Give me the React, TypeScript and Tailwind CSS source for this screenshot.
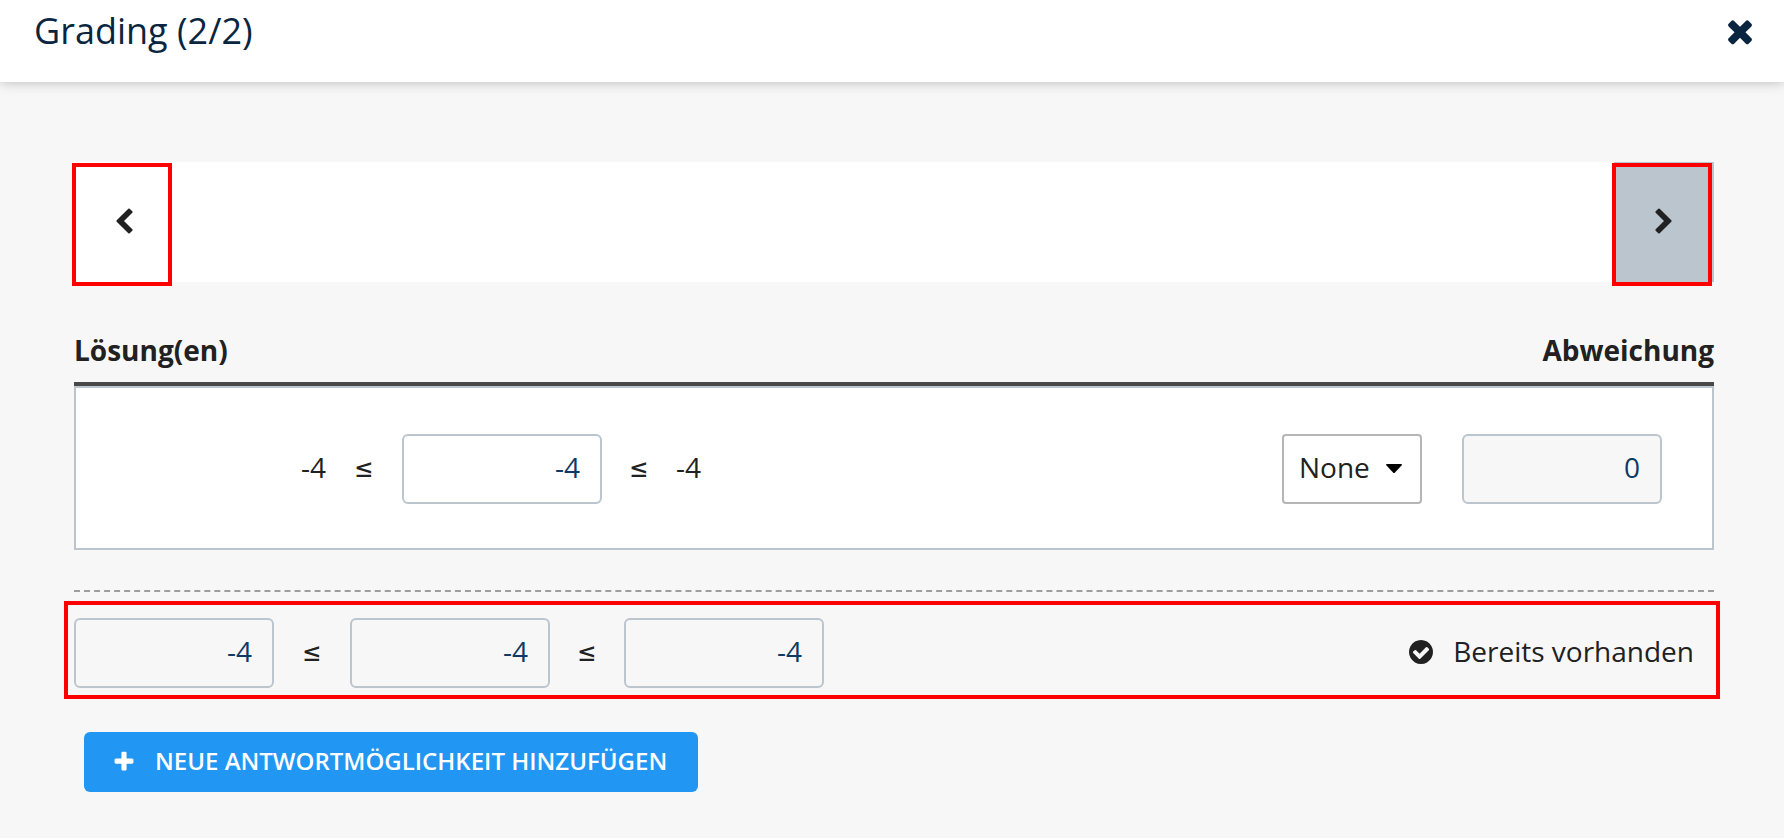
import React, { useState } from 'react'

const icons = {
  close: 'M1490 1322q0 40-28 68l-136 136q-28 28-68 28t-68-28l-294-294-294 294q-28 28-68 28t-68-28l-136-136q-28-28-28-68t28-68l294-294-294-294q-28-28-28-68t28-68l136-136q28-28 68-28t68 28l294 294 294-294q28-28 68-28t68 28l136 136q28 28 28 68t-28 68l-294 294 294 294q28 28 28 68z',
  plus: 'M1600 736v192q0 40-28 68t-68 28h-416v416q0 40-28 68t-68 28h-192q-40 0-68-28t-28-68v-416h-416q-40 0-68-28t-28-68v-192q0-40 28-68t68-28h416v-416q0-40 28-68t68-28h192q40 0 68 28t28 68v416h416q40 0 68 28t28 68z',
  check: 'M1412 734q0-28-18-46l-91-90q-19-19-45-19t-45 19l-408 407-226-226q-19-19-45-19t-45 19l-91 90q-18 18-18 46 0 27 18 45l362 362q19 19 45 19 27 0 46-19l543-543q18-18 18-45zm252 162q0 209-103 385.5t-279.5 279.5-385.5 103-385.5-103-279.5-279.5-103-385.5 103-385.5 279.5-279.5 385.5-103 385.5 103 279.5 279.5 103 385.5z',
  chevron: 'M1427 301l-531 531 531 531q19 19 19 45t-19 45l-166 166q-19 19-45 19t-45-19l-742-742q-19-19-19-45t19-45l742-742q19-19 45-19t45 19l166 166q19 19 19 45t-19 45z',
}

interface IconProps {
  name: keyof typeof icons
  className: string
}

const Icon: React.FC<IconProps> = ({ name, className }) => (
  <svg viewBox="0 0 1792 1792" fill="currentColor" aria-hidden="true" className={className}>
    <path d={icons[name]} />
  </svg>
)

interface NumberFieldProps {
  label: string
  value: string
  onChange?: (value: string) => void
}

// Fields without a change handler are read only and get the grey fill
const NumberField: React.FC<NumberFieldProps> = ({ label, value, onChange }) => (
  <input
    type="text"
    aria-label={label}
    value={value}
    readOnly={!onChange}
    onChange={(e) => onChange?.(e.target.value)}
    className={`h-[70px] w-[200px] rounded-md border-2 border-[#bbc5ce] px-5 pb-1 text-right text-[#0f3a63] ${onChange ? 'bg-white' : 'bg-[#f7f7f7]'}`}
  />
)

const LessEqual: React.FC<{ className: string }> = ({ className }) => (
  <span className={`pb-0.5 text-center font-['DejaVu_Sans_Mono',monospace] ${className}`}>≤</span>
)

const NavHighlight = () => (
  <span className="pointer-events-none absolute top-px -left-0.5 h-[123px] w-[100px] border-4 border-[#ff0000]" />
)

const App: React.FC = () => {
  const [answer, setAnswer] = useState('-4')
  const [deviation, setDeviation] = useState('none')

  return (
    <div className="min-h-screen bg-[#f7f7f7] font-['Open_Sans',sans-serif] text-[28px] leading-10 text-[#212121]">
      <header className="relative flex h-[82px] items-start justify-between bg-white pr-[26px] pl-[34px] text-[#0a2540] shadow-[0_0_12px_rgba(0,0,0,0.26)]">
        <h1 className="pt-1 text-[36px] leading-[54px]">Grading (2/2)</h1>
        <button type="button" aria-label="Schließen" className="pt-[13px]">
          <Icon name="close" className="size-9" />
        </button>
      </header>

      <main className="pt-20 pr-[70px] pl-[74px]">
        {/* Pager */}
        <nav className="flex h-[120px] justify-between bg-white">
          <button type="button" aria-label="Zurück" className="relative flex w-[100px] items-center justify-center">
            <Icon name="chevron" className="size-7" />
            <NavHighlight />
          </button>
          <button type="button" aria-label="Weiter" className="relative flex w-[100px] items-center justify-center bg-[#bbc5ce]">
            <Icon name="chevron" className="size-7 -scale-x-100" />
            <NavHighlight />
          </button>
        </nav>

        {/* Solutions */}
        <table className="mt-12 w-full border-separate border-spacing-0">
          <thead>
            <tr>
              <th className="border-b-4 border-[#484848] pb-3 text-left">Lösung(en)</th>
              <th className="border-b-4 border-[#484848] pb-3 text-right">Abweichung</th>
            </tr>
          </thead>
          <tbody>
            <tr className="bg-white">
              <td className="border-y-2 border-l-2 border-[#bbc5ce] pt-[46px] pb-11">
                <div className="flex items-center">
                  <span className="w-[250px] pb-1 text-right">{answer}</span>
                  <LessEqual className="w-[76px]" />
                  <NumberField label="Lösung" value={answer} onChange={setAnswer} />
                  <LessEqual className="w-[74px]" />
                  <span className="pb-1">{answer}</span>
                </div>
              </td>
              <td className="border-y-2 border-r-2 border-[#bbc5ce] pt-[46px] pr-[50px] pb-11">
                <div className="flex items-center justify-end gap-10">
                  <div className="relative">
                    <select
                      aria-label="Art der Abweichung"
                      value={deviation}
                      onChange={(e) => setDeviation(e.target.value)}
                      className="block h-[70px] w-[140px] appearance-none rounded border-2 border-[#b5b5b5] bg-white pb-1 pl-[15px]"
                    >
                      <option value="none">None</option>
                    </select>
                    <svg viewBox="0 0 16 9" className="pointer-events-none absolute top-[30px] right-5 w-4 text-black" fill="currentColor" aria-hidden="true">
                      <path d="M1 0h14q1 0 1 1L9 8.500q-1 1-2 0L0 1q0-1 1-1z" />
                    </svg>
                  </div>
                  <NumberField label="Abweichung" value="0" />
                </div>
              </td>
            </tr>
          </tbody>
        </table>

        <hr className="mt-10 border-0 border-t-2 border-dashed border-[#9e9e9e]" />

        {/* Existing answer */}
        <section className="relative mt-[26px] flex items-center justify-between">
          <div className="flex items-center">
            <NumberField label="Untere Grenze" value="-4" />
            <LessEqual className="w-[76px]" />
            <NumberField label="Wert" value="-4" />
            <LessEqual className="w-[74px]" />
            <NumberField label="Obere Grenze" value="-4" />
          </div>
          <p className="flex items-center gap-[18px] pr-5 pb-0.5">
            <Icon name="check" className="size-7" />
            <span className="pb-0.5">Bereits vorhanden</span>
          </p>
          <span className="pointer-events-none absolute -top-[17px] -right-1.5 -bottom-[11px] -left-2.5 border-4 border-[#ff0000]" />
        </section>

        <button type="button" className="mt-11 ml-2.5 flex h-[60px] items-center gap-[19px] rounded-md bg-[#2196f3] pr-[31px] pl-7 text-[24px] font-semibold text-white uppercase">
          <Icon name="plus" className="size-6" />
          <span className="pb-0.5">Neue Antwortmöglichkeit hinzufügen</span>
        </button>
      </main>
    </div>
  )
}

export default App
